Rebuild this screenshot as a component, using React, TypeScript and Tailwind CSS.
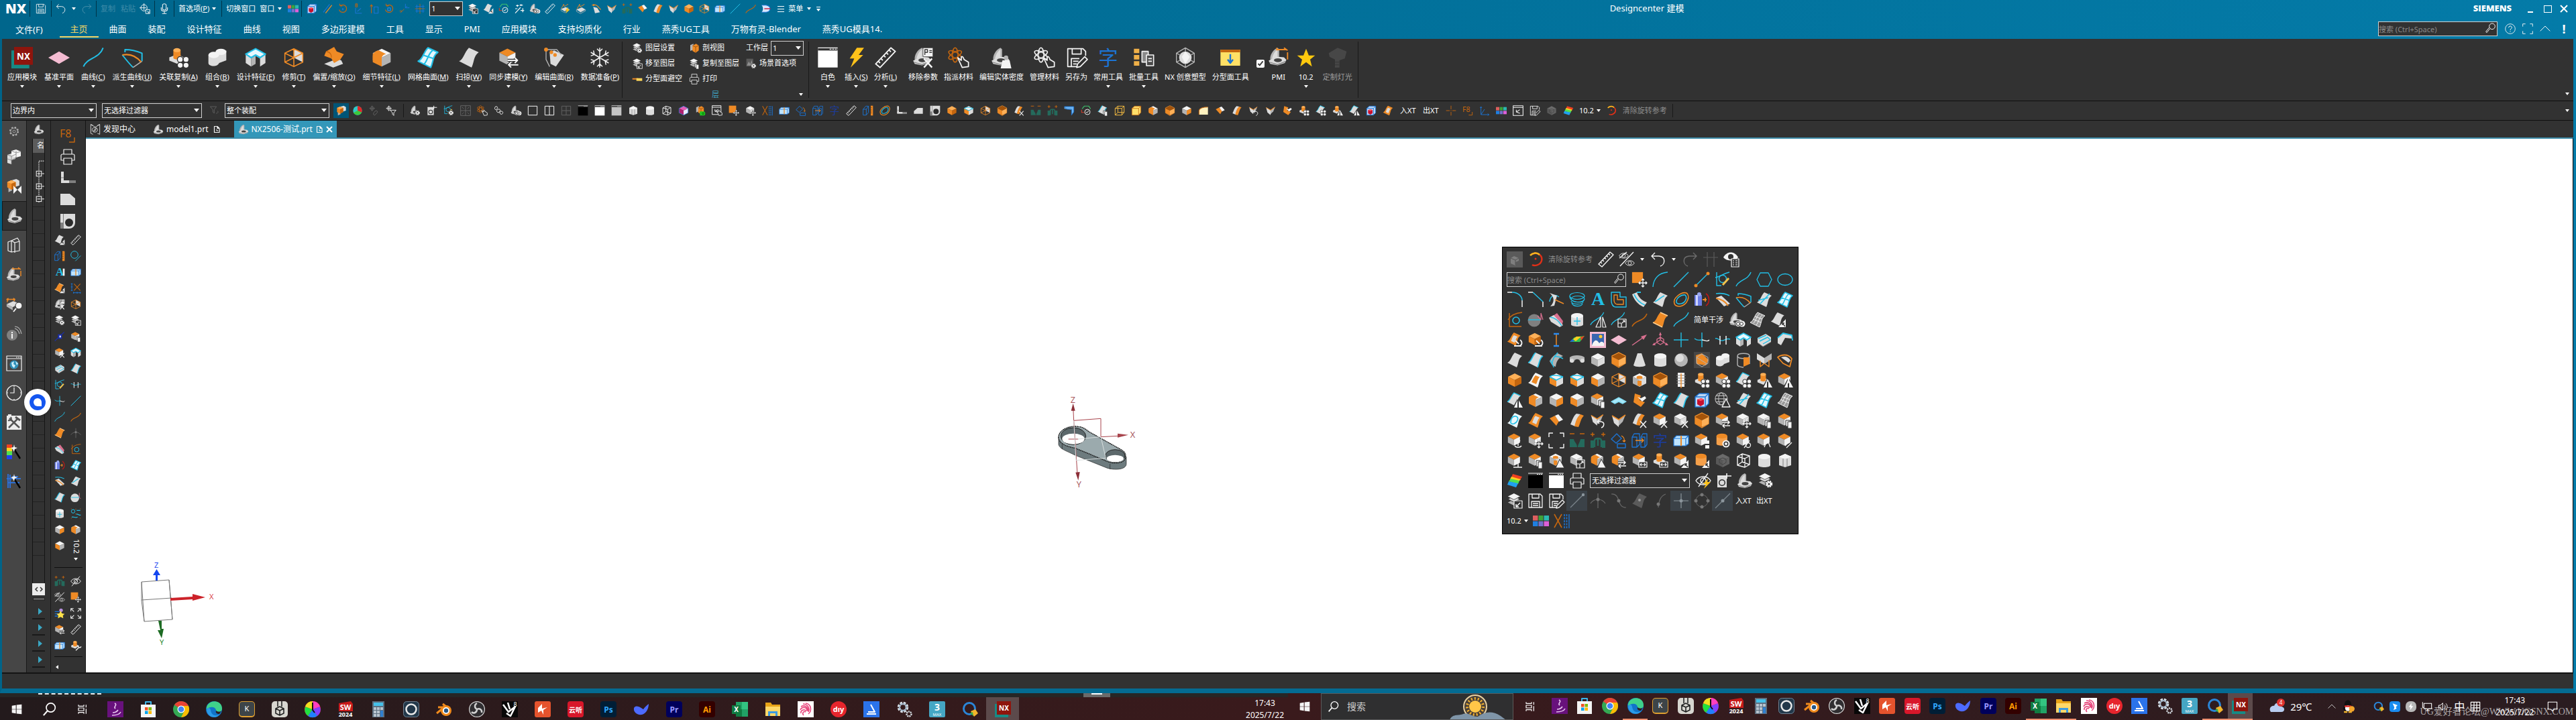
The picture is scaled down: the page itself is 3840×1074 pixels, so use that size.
import React from "react";
import clsx from "clsx";

// --- COLORS ---
const O = "#ee8a25";
const OD = "#c4660f";
const C = "#22bfe6";
const B = "#1c74d4";
const W = "#f4f4f4";
const G = "#dcdcdc";
const M = "#b4b4b4";
const D = "#808080";
const PK = "#d8708f";

// --- DRAWING HELPERS ---
const s = (d: string, stroke = W, w = 1.4, fill = "none") => (
  <path d={d} stroke={stroke} strokeWidth={w} fill={fill} strokeLinejoin="round" />
);
const f = (d: string, fill = W) => <path d={d} fill={fill} />;
const dot = (x: number, y: number, r: number, fill = W, stroke = "none") => (
  <circle cx={x} cy={y} r={r} fill={fill} stroke={stroke} strokeWidth={1} />
);
const cube = (t: string, l: string, r: string) => (
  <>
    {f("M12 2L22 7L12 12L2 7z", t)}
    {f("M2 7L12 12V22L2 17z", l)}
    {f("M12 12L22 7V17L12 22z", r)}
  </>
);
const sheet = (fill: string) => f("M1 16C6 14 7 6 12 1L23 6C17 10 18 17 15 23z", fill);
const cyl = (top: string, body: string) => (
  <>
    {f("M3 6V19C3 23 21 23 21 19V6z", body)}
    <ellipse cx={12} cy={6} rx={9} ry={4} fill={top} />
  </>
);
const glyph = (t: string, fill: string, size = 22) => (
  <text x={12} y={20} fontSize={size} fill={fill} textAnchor="middle" className="font-['Liberation_Serif','Noto_Sans_CJK_SC',serif]">
    {t}
  </text>
);
const bracket = (
  <>
    {f("M3 16C2 10 7 3 12 1L14 3V12L6 18z", M)}
    {f("M5 15C6 10 9 5 12 3V12z", G)}
    {f("M1 17L11 12L20 13L23 16L21 20L12 23L3 21z", G)}
    <ellipse cx={12.5} cy={16.5} rx={5} ry={2.4} fill="#444" />
    {s("M2 19L12 22L22 18", D, 1)}
  </>
);
const layers = (
  <>
    {f("M12 11L22 16L12 21L2 16z", M)}
    {f("M12 6L22 11L12 16L2 11z", "#323232")}
    {f("M12 6L21 10.500L12 15L3 10.500z", G)}
    {f("M12 1L22 6L12 11L2 6z", W)}
    {s("M3 7L12 11.500L21 7", "#555", 1)}
  </>
);
const win = (fill: string, bar = "#323232") => (
  <>
    {f("M1 1H23V23H1z", fill)}
    {f("M1 1H23V4H1z", bar)}
    {s("M1 1H23M14 2.500h2M17 2.500h2M20 2.500h2", W, 1)}
  </>
);
const rulerIcon = s("M1 19L18 1L23 5L6 23zM4 16l2 2M7 13l2 2M10 9.500l2 2M13 6.500l2 2M16 3.500l2 2", W, 1.4);
const undoIcon = s("M7 2L2 7L7 12M2 7H13C24 8 22 20 15 22", W, 1.4);
const atom = (c: string) => (
  <g fill="none" stroke={c} strokeWidth={1.3}>
    <ellipse cx={9} cy={10} rx={3.5} ry={9} />
    <ellipse cx={9} cy={10} rx={3.5} ry={9} transform="rotate(60 9 10)" />
    <ellipse cx={9} cy={10} rx={3.5} ry={9} transform="rotate(120 9 10)" />
  </g>
);
const eye = (
  <>
    {s("M1 12C6 4 18 4 23 12C18 20 6 20 1 12z", W, 1.4)}
    <circle cx={12} cy={12} r={4} fill="none" stroke={W} strokeWidth={1.4} />
  </>
);

// --- ICON BASES (24x24) ---
const bases: Record<string, React.ReactNode> = {
  cubeG: cube(W, M, G),
  cubeT: cube(O, M, W),
  cubeL: cube(W, O, M),
  cubeR: cube(W, M, O),
  cubeO: cube("#ffb057", O, OD),
  cubeE: <>{cube(W, O, M)}{f("M2 10C3 5 7 4 9 4L17 8C13 8 11 12 11 18L2 15z", O)}</>,
  cubeC: <>{cube(W, O, G)}{s("M2 7L12 12L22 7M2 7C8 3 14 5 22 7", C, 1.5)}</>,
  cubeW: <>{f("M12 2L22 7V17L12 12z", G)}{s("M12 2L22 7V17L12 22L2 17V7zM2 7L12 12L22 7M12 12V22M12 2V12L2 17", O, 1.2)}</>,
  cubeH: <>{cube(W, M, G)}<ellipse cx={12} cy={8} rx={4.5} ry={2.5} fill={O} />{f("M9 13L15 13V20L12 21L9 20z", O)}</>,
  cubeI: <>{s("M12 1L22 6V17L12 23L2 17V6z", O, 1.4)}{cube("#a55308", O, "#ffb057")}</>,
  cubeDim: <>{cube("#6b6b6b", "#585858", "#626262")}{s("M12 8L17 10V15L12 18L7 15V10z", "#444", 1)}</>,
  cubeRed: (
    <>
      {f("M2 7L8 2H22V17L17 22H2z", "#bcd8f7")}
      {s("M2 7H17V22H2zM2 7L8 2H22L17 7M22 2V17L17 22", B, 1.4)}
      {f("M5 11L11 9L15 11V18L10 21L5 18z", "#c8102e")}
      {f("M5 11L11 9L15 11L10 13z", "#ff5560")}
    </>
  ),
  cubeMag: <>{cube("#e35bb5", "#b02070", "#ececff")}{s("M12 2L22 7V17L12 22L2 17V7z", "#2d8cf0", 1)}</>,
  cubeY: <>{f("M2 7L8 2H22V16L17 22H2z", "#ffdf6b")}{s("M2 7H17V22H2zM2 7L8 2H22L17 7M22 2V16L17 22", OD, 1.2)}</>,
  cubeYw: s("M2 7H17V22H2zM2 7L8 2H22L17 7M22 2V16L17 22M8 2V16H22M8 16L2 22", "#f0b840", 1.5),
  box3: <>{f("M4 14L10 11V20L4 23z", M)}{f("M10 3L17 1L22 4V12L16 14z", G)}{f("M2 6L9 3L16 6V15L9 19L2 15z", O)}{f("M2 6L9 3L16 6L9 9z", "#ffb057")}{f("M9 9L16 6V15L9 19z", OD)}</>,
  wire: s("M3 6L10 2L21 5V18L14 22L3 19zM3 6L14 9L21 5M14 9V22M10 2V14L3 19M10 14L21 18", W, 1.4),
  gem: (
    <>
      {dot(12, 12, 7, G)}
      {s("M12 1L22 7V17L12 23L2 17V7zM12 1V5M22 7L18 9M22 17L18 15M12 23V19M2 17L6 15M2 7L6 9", M, 1)}
      {f("M12 5L17 11L12 19L8 11z", W)}
    </>
  ),
  cyl: cyl(W, G),
  cylO: cyl(O, "#f5a04a"),
  cylC: <>{cyl(W, G)}{s("M12 8V20M7 14H17", C, 1.3)}</>,
  drum: <>{f("M3 6L12 2L21 6V19L12 22L3 19z", G)}{f("M3 6L12 2L21 6L15 9L9 9z", W)}{s("M9 9V21M15 9V21", D, 1)}</>,
  cone: f("M9 2H15L21 20C18 23 6 23 3 20z", G),
  sphere: <>{dot(12, 12, 10, M)}{dot(10, 9, 6, G)}</>,
  sphereP: <>{dot(10, 13, 9.5, D)}{s("M1 12H20", C, 1.4)}{s("M20 2V12L15 6M20 2L23 12", PK, 1.2)}</>,
  sphereW: <>{dot(10, 13, 9.5, G)}{s("M2 12H20", C, 1.4)}{s("M20 2V12L23 15", PK, 1.2)}</>,
  union: <>{f("M2 9V18C2 22 12 23 14 18L22 15V4z", G)}<ellipse cx={8} cy={9} rx={6} ry={3.5} fill={W} /><ellipse cx={16} cy={5.5} rx={6} ry={3.5} fill={W} /></>,
  subtract: <>{s("M3 6V19C3 22 12 23 12 23M3 6C3 1 21 1 21 6V18M3 6C4 11 20 11 21 6", M, 1.4)}{f("M12 8H21V18L12 22z", O)}</>,
  post: <>{f("M2 13L12 9L22 14L12 21L2 17z", G)}{f("M7 4V14C8 16 15 16 16 14V4z", O)}<ellipse cx={11.5} cy={4} rx={4.5} ry={2.5} fill="#ffb057" /></>,
  cove: <>{f("M1 8L7 4L12 7L17 4L23 8V18L17 22V13L12 10L7 13V22L1 18z", G)}{f("M7 13L12 10V19L7 22z", M)}{s("M1 8L12 2L23 8L17 12L12 9L7 12z", C, 1.6, "#e6f8ff")}</>,
  coveF: s("M1 14L12 8L23 14L18 17L12 14L6 17z", "#7fdcf5", 1.4, "#a9e8f8"),
  rib: <>{f("M1 9L9 2L22 5V10L12 9L6 20L1 17z", G)}{s("M1 9L9 2L22 5L23 13", C, 1.8)}</>,
  slab: <>{f("M2 9L14 3L22 8V15L10 22L2 16z", G)}{s("M3 10L15 5M5 14L17 8L21 12L10 18", C, 1.4)}{s("M2 16L10 22L22 15", D, 1)}</>,
  sheet: sheet(G),
  sheetC: <>{sheet(G)}{s("M1 16C6 14 7 6 12 1M15 23C18 17 17 10 23 6", C, 1.7)}</>,
  sheetT: <>{sheet(G)}{s("M1 16C6 14 7 6 12 1L23 6", C, 1.6)}</>,
  sheetM: <>{sheet("#e3f6fc")}{s("M1 16C6 14 7 6 12 1L23 6C17 10 18 17 15 23zM8 19C12 14 12 8 17 4M6 9L18 13", C, 1.6)}</>,
  sheetX: <>{sheet(G)}{s("M6 18L20 3M3 13L18 9", C, 1.6)}</>,
  sheetS: <>{sheet(G)}{s("M4 15C10 12 12 9 18 6", C, 1.6)}</>,
  sheetG: <>{sheet("#9a9a9a")}{s("M1 16C6 14 7 6 12 1L23 6C17 10 18 17 15 23zM6 17C10 13 10 7 15 3M10 20C14 15 14 9 19 5M5 11L17 16M8 7L19 11", W, 1)}</>,
  sheetO: <>{sheet(O)}{s("M12 1L23 6M1 16L15 23", "#ffcf90", 1.5)}</>,
  sheetD: <>{sheet("#5a5a5a")}{dot(12, 11, 2, "#999")}</>,
  sheetF: <>{sheet(W)}{f("M6 15C8 12 9 8 12 5L18 7.500C15 11 15 14 13 18z", O)}</>,
  frameO: <>{sheet(O)}{f("M7 15C9 12 9 8 12 5.500L18 8C15 11 15 14 13 18z", G)}</>,
  sheetP: <>{f("M3 9L13 2L22 14L20 22z", PK)}{f("M1 9L8 5L22 20L17 23L4 15z", G)}{s("M3 8C10 9 16 14 20 21", C, 1.5)}</>,
  sheetR: <>{f("M1 4L8 1C10 8 16 14 23 16L18 23C9 19 4 12 1 4z", G)}{s("M4 4C7 11 12 17 20 20M8 1L14 1", C, 1.8)}</>,
  fold: <>{f("M5 2L14 5L12 12L20 15L14 22L3 15z", O)}{f("M9 7L14 9L20 6L22 9L16 14z", W)}</>,
  band: <>{f("M2 18C5 12 6 6 11 2L17 3C11 9 11 15 9 21z", G)}{f("M8 21C10 14 11 8 17 3L22 5C17 10 17 16 14 22z", O)}</>,
  flap: <>{f("M2 5L12 11L12 22L5 16z", G)}{f("M12 11L22 4L18 14L12 20z", M)}{s("M2 5L12 11L22 4", O, 1.6)}</>,
  bend: <>{f("M2 9L10 5L16 13L12 20z", O)}{f("M10 5L15 3L22 11L16 14z", W)}</>,
  offsetF: <>{f("M1 19L11 15L12 12L20 15L22 19L11 23z", G)}{f("M3 5L12 0L15 5L23 8L19 14L12 18L9 13L1 10z", O)}{s("M3 5C8 6 9 8 9 12", OD, 1)}</>,
  edit: <>{f("M7 6L12 4L23 9L14 22L8 19z", G)}{s("M3 3H15L20 9M3 3V14L7 22", M, 1)}{dot(3, 3, 2.2, O)}{dot(9, 6, 2, O)}{dot(13, 9, 2, O)}</>,
  curveA: <>{s("M4 6V3C12 3 18 5 23 7V16", C, 1.5)}{s("M1 9C5 14 10 20 13 23", C, 1.5)}{s("M13 23L23 16", M, 1.2)}{s("M1 9C11 7 18 12 22 17", O, 1.7)}</>,
  curveB: <>{f("M2 9L10 6L23 18L14 22z", G)}{s("M2 3C10 2 16 3 22 6", C, 1.6)}{s("M2 10C10 11 16 15 20 21", O, 2)}</>,
  curveD: <>{s("M1 8C6 4 16 2 22 10L19 22L9 17z", O, 1.8)}{f("M6 8C12 6 17 7 20 13L17 16z", G)}</>,
  sCurve: s("M1 22C5 12 19 13 23 1", C, 1.5),
  sCurveO: s("M1 22C5 12 19 15 23 3", OD, 1.6),
  curveS: <>{s("M2 15C3 6 10 3 16 8", C, 1.4)}{f("M2 2L13 6L9 21L3 22C10 15 9 8 2 2z", G)}{s("M10 12L23 18", O, 1.6)}</>,
  line: s("M1 23L23 1", C, 1.5),
  lineP: <>{s("M3 21L21 3", C, 1.4)}{dot(3, 21, 2.5, O)}{dot(21, 3, 2.5, O)}</>,
  lineD: <>{s("M2 22L21 3", "#7b858c", 1.2)}{dot(21, 3, 2.2, "#8b959c")}</>,
  lineM: <>{s("M1 23L23 1", "#7b858c", 1.2)}{dot(12, 12, 2.5, "#8b959c")}</>,
  crossD: <>{s("M1 12H23M12 1V23", "#8b959c", 1.2)}{dot(12, 12, 2.5, "#8b959c")}</>,
  tangD: <>{s("M1 16C6 8 18 8 23 16M12 1V23", "#6a6a6a", 1.2)}{dot(12, 10, 2.5, "#777")}</>,
  curveDim: <>{s("M1 2C16 1 8 22 23 22", "#666", 1.2)}{dot(12, 12, 2.5, "#777")}</>,
  curveDim2: <>{s("M20 2C12 5 10 12 9 22", "#666", 1.2)}{dot(9, 17, 2.5, "#777")}</>,
  ringD: <><circle cx={12} cy={12} r={9} fill="none" stroke="#666" />{dot(12, 3, 2.5, "#777")}{dot(3, 12, 2.5, "#777")}{dot(21, 12, 2.5, "#777")}{dot(12, 21, 2.5, "#777")}</>,
  arc: s("M1 23C2 10 10 2 23 1", C, 1.4),
  sketch: <>{s("M3 1V21H10M1 9C8 8 12 3 22 1", C, 1.4)}<circle cx={12} cy={11} r={5.5} fill="none" stroke={C} strokeWidth={1.4} />{s("M12 20L21 10", "#f2c14a", 3)}</>,
  sketchO: <>{s("M4 2V22H22M2 12C6 5 12 2 23 1", OD, 1.4)}<circle cx={14} cy={13} r={5} fill="none" stroke={C} strokeWidth={1.5} /></>,
  hexagon: s("M6 2H18L23 12L18 22H6L1 12z", C, 1.3),
  ellipse: <ellipse cx={12} cy={12} rx={11} ry={8.5} fill="none" stroke={C} strokeWidth={1.3} />,
  corner: <>{s("M8 1C18 1 23 8 23 13", C, 1.5)}{s("M1 1H8M23 13V23", W, 1.5)}</>,
  chamfer: <>{s("M8 1L23 15", C, 1.5)}{s("M1 1H8M23 15V23", W, 1.5)}</>,
  spring: (
    <g fill="none" stroke={C} strokeWidth={1.2}>
      <ellipse cx={12} cy={6.5} rx={11} ry={5} />
      <ellipse cx={13} cy={11} rx={10} ry={4.5} />
      <path d="M1 7C1 17 22 18 22 12M3 14C4 20 20 20 21 15M4 17C6 23 18 23 20 18" />
    </g>
  ),
  A: <g fontWeight="bold">{glyph("A", C, 28)}</g>,
  AI: <><g fontWeight="bold">{glyph("A", C, 26)}</g>{f("M19 4H23V20H19z", W)}</>,
  zi: glyph("字", "#1c3c9c", 22),
  ziB: glyph("字", B, 22),
  offset: <>{s("M1 1H14V8H23V23H8C3 23 1 18 1 14z", C, 1.4)}{s("M5 5H10V12H19V19H10C7 19 5 16 5 13z", O, 1.4)}</>,
  loop: <>{s("M2 18C-1 10 12 0 20 2C26 6 22 20 10 22C6 22 3 21 2 18z", O, 1.6)}{s("M5 16C4 10 12 4 18 5C22 9 18 17 12 18C8 19 6 18 5 16z", C, 1.6)}</>,
  loopS: <>{sheet("#eaf6fa")}{s("M6 15C6 9 9 5 14 6C19 8 16 15 11 17C8 18 6 17 6 15z", C, 1.6)}</>,
  barrel: <>{f("M1 5H12V21H1z", "#6d7fe8")}{f("M3 5H6V21H3z", "#cfd6ff")}{dot(8, 4, 3, "#9aa8f0")}{s("M13 12H19M17 9V15", O, 1.8)}{s("M18 3C24 7 24 17 18 21", "#c01818", 1.6)}</>,
  plane: f("M12 5L24 12L12 19L0 12z", "#f4bcd2"),
  arrowP: <>{s("M1 20L18 8", PK, 1.4)}{f("M23 4L18 12L14 7z", PK)}</>,
  csys: <>{s("M12 2V12L2 19M12 12L22 19M12 8L17 11V16L12 19L7 16V11z", PK, 1.3)}{f("M12 0L14 5H10z", PK)}{f("M0 20L3 16L5 20z", PK)}{f("M24 20L21 16L19 20z", PK)}</>,
  plus: s("M12 1V23M1 12H23", C, 1.4),
  plusC: <>{s("M12 1V23M1 10C6 14 9 12 12 12", C, 1.4)}{s("M12 12C16 12 20 16 23 12", W, 1.4)}</>,
  hh: <>{s("M1 10C5 8 6 14 12 13C17 12 18 9 23 11", C, 1.4)}{s("M8 6V19M17 6V19", W, 1.5)}</>,
  ibeam: <>{s("M12 4V20", O, 1.5)}{s("M8 3H16M8 21H16", "#2d8cf0", 2.5)}</>,
  blade: <>{f("M1 15L8 8L23 6L16 15z", "#30c050")}{f("M6 11L11 7L18 7L10 14z", "#ffd020")}{f("M1 15L5 11L8 14z", "#2060e0")}{f("M17 8L23 6L18 13z", "#f04020")}</>,
  picture: <>{f("M0 0H24V24H0z", "#f4bcd2")}{f("M3 3H21V21H3z", "#3a66b0")}{f("M3 20C7 10 11 12 14 17C17 13 20 15 21 17V21H3z", W)}{dot(16, 7, 2.5, "#ffc830")}</>,
  tube: <>{f("M1 8C5 4 19 4 23 8V13C21 17 17 17 16 13C14 10 10 10 8 13C7 17 3 17 1 13z", M)}{dot(4, 13, 3, G)}{dot(20, 13, 3, G)}</>,
  pipe: <>{f("M2 14C5 8 8 5 14 2L22 6C15 9 12 14 11 22L6 20z", M)}{s("M3 12C5 18 8 20 8 23M14 1C10 6 6 10 6 18M9 7C14 6 18 8 22 10", C, 1.4)}</>,
  trimO: <>{f("M0 0H24V24H0z", "#474747")}{f("M3 5L12 2L22 12L18 20L4 18z", O)}{s("M12 3L21 8V17L12 22L4 17V8zM4 8L20 18", M, 1)}</>,
  butterfly: <>{f("M1 2L12 9V18L1 11z", G)}{f("M23 2L12 9V18L23 11z", M)}{s("M6 13V22L12 17L19 22V12", O, 1.4)}</>,
  screw: <>{f("M7 1H17V22H7z", W)}{s("M5 5H19M5 9H19M5 13H19M5 17H19", D, 1.2)}{s("M12 2V24", O, 1.4)}</>,
  globe: <><circle cx={11} cy={11} r={10} fill="none" stroke={M} strokeWidth={1.3} /><ellipse cx={11} cy={11} rx={4.5} ry={10} fill="none" stroke={M} strokeWidth={1.3} />{s("M1 11H21M3 6H19M3 16H19", M, 1.2)}</>,
  corners: s("M1 7V1H7M17 1H23V7M23 17V23H17M7 23H1V17", W, 1.4),
  expand: s("M1 7V1H7M1 1L8 8M17 1H23V7M23 1L16 8M23 17V23H17M23 23L16 16M7 23H1V17M1 23L8 16", W, 1.6),
  moldA: <>{f("M1 10H7C8 15 12 16 12 22H1z", "#246a5c")}{f("M23 10H17C16 15 13 18 13 22H23z", "#246a5c")}{s("M1 2H8M16 2H23", OD, 1.6)}</>,
  moldB: <>{f("M1 12H6V23H1zM18 12H23V23H18z", "#246a5c")}{s("M7 22V12C7 8 17 8 17 12V22M12 9V20", "#246a5c", 2.5)}{s("M1 3H7M4 0V6M17 3H23M20 0V6", OD, 1.4)}</>,
  rotBox: <>{s("M1 10L9 2L16 9L8 16zM10 17H22V23H10z", B, 1.4)}{s("M16 5C20 7 21 10 20 14M18 12L20 14L22 12", O, 1.2)}</>,
  pushBox: <>{s("M1 7H8V22H1zM1 7L4 2H12V18L8 22M14 7H20V22H14zM14 7L17 2H23V18L20 22", B, 1.3)}{s("M6 12H18M15 9L18 12L15 15", O, 1.4)}</>,
  glass: <>{f("M1 9L5 5H23V17L19 20H1z", "#bfe4ff")}{s("M1 9H19V20H1zM1 9L5 5H23L19 9M23 5V17L19 20", B, 1.2)}{s("M12 5V20", O, 2)}</>,
  frameR: <>{s("M1 9L7 2H13V16L8 22H1zM1 9H8V22M8 9L13 2", B, 1.4)}{f("M18 1H23V23H18z", O)}{s("M18 5h3M18 9h3M18 13h3M18 17h3", "#7a3d08", 1)}</>,
  xDots: <>{s("M1 2L12 22M12 2L1 22", OD, 1.6)}<path d="M16 2V23M19.500 2V23" stroke={B} strokeWidth={1.6} strokeDasharray="3 1.500" />{s("M23 2V23", B, 1.4)}</>,
  xAxis: <>{s("M8 2L22 17M22 2L8 17", OD, 1.6)}{s("M3 1V18M1 2h4M1 9h4M1 17h4M6 22H23M7 20v4M15 20v4M22 20v4", B, 1.4)}</>,
  triCirc: <><circle cx={9} cy={9} r={8} fill="none" stroke={C} strokeWidth={1.4} />{s("M11 23L23 11", C, 1.4)}</>,
  circles: <>{s("M14 5h8M13 14C17 11 18 18 23 15M3 20C8 18 10 23 16 20", C, 1.8)}<circle cx={6} cy={7} r={4} fill="none" stroke={C} strokeWidth={1.5} />{s("M2 1v1M12 2v1M22 1v1M2 23v-1M12 12v1M22 22v1", O, 1.8)}</>,
  ruler: rulerIcon,
  rulerC: <>{s("M3 20L17 2", B, 1.8)}{s("M8 22L22 4", O, 2)}</>,
  print: s("M6 8V1H18V8M6 17H2V10C2 9 3 8 4 8H20C21 8 22 9 22 10V17H18M6 14H18V23H6z", W, 1.2),
  save: s("M2 2H19L22 5V22H2zM7 2V8H17V2M6 22V13H18V22M8 16h8M8 19h8", W, 1.3),
  saveEdit: <>{s("M13 22H2V2H19L22 5V10M7 2V8H17V2M6 22V13H15M8 16h6M8 19h4", W, 1.3)}{s("M12 23L13 19L21 11L24 14L16 22z", W, 1.3, "#323232")}</>,
  undo: undoIcon,
  redo: <g transform="translate(24 0) scale(-1 1)" opacity={0.3}>{undoIcon}</g>,
  hash: s("M7 1V23M17 1V23M1 9H23", "#5a5a5a", 1.2),
  touch: <><circle cx={10} cy={10} r={7} fill="none" stroke={W} strokeWidth={1.5} />{s("M10 0V15M0 10H15M14 14H23V23H14zM17 17l4 4m0-3v3h-3", W, 1.4)}</>,
  mic: s("M8 4C8 0 16 0 16 4V12C16 16 8 16 8 12zM5 9V13C5 19 19 19 19 13V9M12 18V23M7 23H17", W, 1.6),
  search: <><circle cx={15} cy={8} r={6.5} fill="none" stroke={W} strokeWidth={1.5} />{s("M10 13L3 22L1 20L8 11", W, 1.5)}</>,
  swatches: (
    <>
      {f("M0 4H7.500V11.500H0z", "#dc5f5f")}
      {f("M8.500 4H15.500V11.500H8.500z", "#3da33a")}
      {f("M16.500 4H24V11.500H16.500z", "#2bb8b0")}
      {f("M0 12.500H7.500V20H0z", "#1f7fe0")}
      {f("M8.500 12.500H15.500V20H8.500z", "#7470cc")}
      {f("M16.500 12.500H24V20H16.500z", "#dd5fd8")}
    </>
  ),
  rainbow: (
    <>
      {f("M9 2L23 6L20 11L7 7z", "#f04020")}
      {f("M7 6L21 10L18 13L5 10z", "#ffd020")}
      {f("M6 9L19 12L17 17L3 13z", "#50e050")}
      {f("M3 13L17 16L14 22L1 18z", "#20a0f0")}
    </>
  ),
  rot: <>{s("M5 5C14 -1 23 6 21 14C19 21 10 22 7 20", "#e03018", 2.5)}{s("M4 6C8 2 14 1 18 5", "#f5b720", 2.5)}{dot(12, 11, 1.5, "#e03018")}</>,
  rotO: <>{s("M6 6C14 0 22 6 20 14C18 22 6 22 4 14M6 6L5 1M6 6L11 6", OD, 1.8)}{dot(12, 13, 2, B)}</>,
  rotS: <>{s("M6 6C14 0 22 6 20 14C18 22 6 22 4 14M6 6L5 1M6 6L11 6", OD, 1.8)}{s("M9 10H15V16H9z", "#2d8cf0", 1.6)}</>,
  axisUp: <>{s("M7 22V3M4 7L7 3L10 7", OD, 1.6)}{s("M13 8H22V22H13z", B, 1.6)}</>,
  axisB: <>{s("M6 10V22H20M10 18L18 11", B, 1.6)}{s("M6 1h4v3h-4zM6 4v4h4v-4", OD, 1.4)}</>,
  grid4: <>{s("M12 1V23M1 12H23", OD, 1.3)}{s("M5 3V21M19 3V21M2 7H22M2 17H22", B, 1.5)}</>,
  axisX: <>{s("M14 10V1M14 10H23M14 10L18 6", B, 1.5)}{s("M3 21L11 13M1 17h5", OD, 1.4)}</>,
  hex8: <>{s("M3 8L8 2H18L22 8", "#3ec46d", 1.6)}{s("M2 10V16H8", "#d0402c", 1.6)}<circle cx={15} cy={15} r={6} fill="none" stroke={W} strokeWidth={1.4} />{s("M12 15L14 17L18 12", W, 1.5)}</>,
  sparkles: s("M3 22L15 9M8 3V8M5 5H11M16 2V6M13 4H20M3 12H8M20 11V20M15 16H23", W, 1.8),
  palmBox: <>{f("M2 14L14 9L22 14L11 20z", G)}{s("M3 13L9 2L10 8L20 2", O, 1.5)}{s("M11 20L22 14V17L11 23L2 18V14", M, 1.2)}</>,
  bentO: <>{f("M5 8L14 10L20 20L9 22z", G)}{s("M2 4C8 2 14 4 18 10L22 14", O, 1.6)}{dot(6, 4, 2, O)}</>,
  dShape: <>{f("M2 4H12C24 6 24 18 12 20H2C6 15 6 9 2 4z", "#d8e6ff")}{s("M2 4H12C24 6 24 18 12 20H2", B, 1.6)}{s("M8 12H22", "#c8102e", 2)}</>,
  win: win("#fff"),
  winB: win("#000"),
  winGy: win("#c4c4c4"),
  pane1: s("M2 2H22V22H2z", W, 1.5),
  pane2: s("M2 2H22V22H2zM12 2V22", W, 1.5),
  pane4: s("M2 2H22V22H2zM12 2V22M2 12H22", "#606060", 1.5),
  pane9: s("M1 1H23V23H1zM12 1V23M1 12H23M4 4l4 4M20 4l-4 4M4 20l4-4M20 20l-4-4", "#707070", 1.2),
  eyeOff: <>{eye}{s("M3 23L21 1", W, 1.4)}</>,
  eyeBolt: <>{eye}{s("M5 21L19 1", W, 1.4)}{f("M19 9L12 17H16L13 24L23 14H18z", "#ffc21a")}</>,
  eyePair: <><g transform="translate(0 -1) scale(.62)">{eye}</g><g transform="translate(9 10) scale(.62)">{eye}</g>{s("M2 22L22 1M1 10L12 1", W, 1.4)}</>,
  eyeList: <>{f("M0 9C5 -1 17 -1 22 9C17 15 5 15 0 9z")}{dot(11, 8, 4, "#323232")}{s("M12 11H23V23H12z", W, 1.2, "#323232")}{s("M14 14h2M14 17h2M14 20h2M18 14h3M18 17h3M18 20h3", W, 1.2)}</>,
  bracket,
  layers,
  bars: <>{f("M2 2H6V17H2z", G)}{f("M2 15H24V19H2z", G)}{f("M14 15H24V19H14z", D)}{s("M2 11H6", D, 1)}</>,
  trap: f("M1 3H15L23 10V20H1z", G),
  trapS: f("M2 19V13L10 6H22V19z", G),
  plateHole: <>{f("M1 1H23V14C23 20 18 23 14 23H1z", G)}{f("M1 14H5V23H1z", D)}{dot(14, 14, 6, "#2b2b2b")}{s("M5.500 1V23", D, 1)}</>,
  bolts: <>{f("M2 5H16V22H2z", G)}{dot(9, 15, 5, "#2b2b2b")}{dot(9, 15, 3.5, G)}{s("M2 5H23M16 1V9", W, 1.6)}</>,
  blocks: <>{f("M2 9L8 7L14 9V15L8 17L8 23L2 21z", G)}{f("M8 3L15 1L22 4V11L15 13L8 10z", W)}{s("M2 9L8 11V23M8 11L15 8M2 15L8 17L15 13M15 3V13M15 6L22 4M8 3L15 6", D, 0.8)}</>,
  books: s("M3 7L8 5V22L3 20zM8 5L13 3M8 22L20 20V6L13 8L13 23M13 8L8 5L17 1L20 6", W, 1.2),
  info: <>{dot(9, 14, 8, D)}{f("M8 12H10V19H8zM8 9H10V11H8z")}{s("M13 4C17 5 19 8 20 12M13 1C19 1 22 6 23 12", M, 1.2)}</>,
  web: <>{s("M1 1H23V23H1zM1 5H23M15 3h2M18 3h2M21 3h1", W, 1.2)}{dot(12, 14, 6.5, "#2f8fb8")}{f("M8 11L12 9L11 13L14 15L12 19L9 16zM14 9L18 12L16 15z", "#cdeefa")}</>,
  clock: <><circle cx={12} cy={12} r={11} fill="none" stroke={W} strokeWidth={1.2} />{s("M12 4V12H6M12 1v2M12 23v-2M1 12h2M23 12h-2", W, 1.2)}</>,
  tools: <>{f("M1 2H23V23H1z", "#ececec")}{f("M3 0H8V3H3z", "#ececec")}{s("M5 6L20 20M18 6L4 20", "#555", 2.5)}{s("M14 4L21 9", "#555", 3)}{s("M3 9C7 10 9 7 7 4", "#555", 2)}</>,
  wandR: <>{f("M1 1H9V6H1z", "#f04020")}{f("M1 6H9V11H1z", "#ffd020")}{f("M1 11H9V17H1z", "#50e050")}{f("M1 17H9V23H1z", "#2040f0")}{s("M12 8L21 22", "#000", 2.5)}{f("M12 1L13 5L17 6L13 8L12 12L10 8L7 6L11 5z")}</>,
  wandB: <>{s("M3 1V22M6 2V22M1 8H22M3 14H20M9 5H18", "#2d6fd4", 2)}{s("M12 8L21 22", "#000", 2.5)}{f("M12 1L13 5L17 6L13 8L12 12L10 8L7 6L11 5z")}</>,
  gear: (
    <>
      <circle cx={12} cy={12} r={9} fill="none" stroke={M} strokeWidth={3} strokeDasharray="3.500 3.570" />
      <circle cx={12} cy={12} r={7.5} fill="none" stroke={M} strokeWidth={1.2} />
      <circle cx={12} cy={12} r={3} fill="none" stroke={M} strokeWidth={1.2} />
    </>
  ),
  funnel: s("M2 3H16L11 10V18L8 15V10zM15 18C20 18 21 14 18 13", "#5f5f5f", 1.4),
  filterP: <>{s("M7 1V13M1 7H13", W, 1.4)}<circle cx={7} cy={7} r={4} fill="none" stroke={W} />{s("M10 11H23L18 17V23L15 20V17z", W, 1.4)}</>,
  dimlink: s("M7 1V13M1 7H13M3 7C3 2 11 2 11 7C11 12 3 12 3 7M13 14C17 10 21 14 18 17L13 22C9 22 9 18 13 14z", "#666", 1.4),
  pie: <>{dot(12, 12, 10, "#30c8c8")}{f("M12 12V2C20 2 24 10 21 16z", "#e02828")}{f("M12 12L21 16C17 24 6 23 3 17z", "#3cc83c")}</>,
  atomO: atom(OD),
  atomW: atom(W),
  linkW: s("M3 4C6 1 10 4 8 7L6 10C3 11 1 7 3 4zM8 10C12 7 16 10 14 13L12 16C8 17 5 14 8 10zM14 14C18 12 22 15 20 18C18 22 12 20 14 14z", W, 1.4),
  nx: <>{f("M0 4H6V18H20V24H0z", "#178a85")}{f("M3 0H24V20H3z", "#8e150d")}<text x={13.5} y={14} fontSize={10} fontWeight="bold" fill="#fff" textAnchor="middle">NX</text></>,
  star: f("M12 2L15 9.500L22 9.500L16.500 14L18.500 22L12 17L5.500 22L7.500 14L2 9.500L9 9.500z", "#ffc90e"),
  bolt: f("M13 1H21L15 9H20L6 23L10 13H5z", "#ffc21a"),
  snow: s("M12 1V23M2 6L22 18M22 6L2 18M9 2L12 5L15 2M9 22L12 19L15 22M2 10L6 8.500L5 4M22 10L18 8.500L19 4M2 14L6 15.500L5 20M22 14L18 15.500L19 20", W, 1.1),
  batch: <>{f("M1 2H7V7H1zM1 9H7V14H1zM1 16H7V21H1z", "#f0b048")}{s("M10 5H17V17H10z", W, 1.2, "#8a8a8a")}{s("M15 9H23V21H15zM17 13h4M17 16h4", W, 1.2, "#4a4a4a")}</>,
  splitT: <>{f("M1 3H23V21H1z", "#ffe066")}{f("M1 3H23V6H1z", OD)}{s("M12 8V17M9 14L12 18L15 14", B, 1.8)}</>,
  lamp: <>{f("M2 7L12 1L22 5L20 13L14 15V23H9V14L3 11z", "#5d5d5d")}{s("M9 17H14M9 20H14", "#454545", 1.2)}</>,
  section: <>{f("M3 5L10 2V15L3 18z", M)}{f("M8 6L16 2L22 6V17L15 22L8 18z", O)}{s("M15 9V22M8 6L15 9L22 6", "#7a3d08", 1)}</>,
  hatch: <>{f("M1 10H14V13H1z", O)}{f("M10 10H23V16H10z", "#ffd75a")}</>,
  scene: <>{f("M1 1H18V20H1z", "#5a5a5a")}{f("M2 18L7 8L11 14L14 4L17 18z", "#8f8f8f")}</>,
  target: s("M12 1V9M12 15V23M1 12H9M15 12H23M12 11v2", OD, 1.4),
  f8: <><text x={0} y={15} fontSize={16} fill={OD}>F8</text>{s("M22 15V22H14", OD, 1.4)}</>,
  axes: s("M4 4V21H22M4 21L12 9M2 6L4 3L6 6M19 19L22 21L19 23", B, 1.4),
  nodeWin: s("M1 1H23V23H1zM1 5H23M8 10V15L16 18M8 15L16 10", W, 1.6),
  blueCorner: <>{f("M1 3H22V15L17 22V10L1 8z", "#6db4f2")}{s("M1 3H22V15L17 22V9H6z", B, 1.3)}</>,
  quarter: <>{f("M2 21V12C3 6 10 4 22 4V21z", "#fff2c0")}{s("M2 21V12C3 6 10 4 22 4", OD, 1.6)}</>,
  boxSel: <>{f("M0 0H24V24H0z", "#5a5a5a")}{f("M6 10L11 7L18 10V14L13 16V21L6 18z", "#7e7e7e")}{s("M6 10L13 13L18 10M13 13V20", "#555", 1)}</>,
  orangeSq: f("M1 1H19V19H1z", O),
  magnifyWire: <>{f("M1 13L12 8L22 12L11 18z", G)}{s("M2 5H14M4 3L1 5L4 7M12 3L15 5L12 7M2 5V10M14 5V8", O, 1.4)}{f("M1 13V17L11 23V18z", M)}</>,
  navy: <>{s("M1 22L22 2", "#1a2fae", 1.8)}{f("M8 7H17V17H8z", "#1a2fae")}{f("M11 12L13 9L15 12L13 15z", "#fff")}</>,
  starman: <>{dot(15, 5, 4, "#b890e0")}{s("M1 8H11M1 13H9M1 18H8", B, 2)}{f("M14 6L17 12L23 13L19 17L20 23L14 20L8 23L9 17L5 13L11 12z", "#ffe14a")}</>,
  find: s("M7 3L2 1V21L7 23M17 3L22 1V23L17 21M2 1L12 7L22 1M5 13C5 6 17 6 17 13C17 20 5 20 5 13M8 16L11 11L14 10L12 15z", W, 1.2),
  clip: s("M5 3H14L20 9V21H5zM14 3V9H20M11 13L15 17", W, 2.4),
  question: <><circle cx={12} cy={12} r={11} fill="none" stroke={W} strokeWidth={1.3} />{s("M8.500 9.500C8.500 4.500 15.500 5 15.500 9C15.500 12 12 11.500 12 15M12 17v2", W, 1.5)}</>,
  up: s("M1 17L12 6L23 17", W, 1.5),
};

// --- BADGES (bottom-right corner) ---
const badges: Record<string, React.ReactNode> = {
  copy: <>{s("M13 12H19V21H13z", "#323232", 1, W)}{s("M16 14H22V24H16z", "#323232", 1, W)}</>,
  x: s("M13 13L22 23M22 13L13 23", W, 1.6),
  swap: <>{s("M11 15H22M19 12L22 15L19 18M23 20H12M15 17L12 20L15 23", "#323232", 3.5)}{s("M11 15H22M19 12L22 15L19 18M23 20H12M15 17L12 20L15 23", W, 1.5)}</>,
  move: <>{s("M17 11V23M11 17H23", "#323232", 4)}{s("M17 11V23M11 17H23M15 13L17 11L19 13M15 21L17 23L19 21M13 15L11 17L13 19M21 15L23 17L21 19", W, 1.3)}</>,
  mir: <>{f("M16 10V23H9zM18 10V23H25z", "#323232")}{f("M16 12V23H11zM18 12V23H24z")}</>,
  mirO: s("M16 8V23H9zM19 8V23H24z", W, 1.2),
  dots: <>{dot(14, 14, 3.2, W, "#323232")}{dot(20.5, 14, 3.2, W, "#323232")}{dot(14, 20.5, 3.2, W, "#323232")}{dot(20.5, 20.5, 3.2, W, "#323232")}</>,
  gear: <>{dot(17, 17, 6, "#323232")}<circle cx={17} cy={17} r={4} fill="none" stroke={W} strokeWidth={2.5} strokeDasharray="2.200 1" />{dot(17, 17, 3.5)}{dot(17, 17, 1.5, "#323232")}</>,
  rings: <><circle cx={14} cy={18} r={4.5} fill={W} stroke="#323232" />{dot(20, 18, 4.5, W)}<circle cx={14} cy={18} r={2.5} fill="none" stroke="#323232" /><circle cx={19} cy={18} r={2.5} fill="none" stroke="#323232" /></>,
  scale: s("M11 11H23V23H11zM11 17H16V23M17 17L21 13M18 13H21V16", W, 1.2, "#323232"),
  box: <>{s("M11 12H23V23H11z", W, 1.2, "#323232")}{s("M20 15L14 21M14 17V21H18", W, 1.5)}</>,
  pick: <>{f("M23 11V23H12z")}{s("M22 22L18 17M18 20V17H21", "#323232", 1.3)}</>,
  tri: s("M17 10L24 23H11z", "#323232", 1, W),
  triO: s("M17 10L23 22H11z", W, 1.3, "#323232"),
  back: s("M14 11L11 14L14 17M11 14H17C23 15 21 22 17 23", W, 1.5),
  ring: <>{dot(17, 17, 5.5, W)}{dot(17, 17, 3.5, "#323232")}{dot(17, 17, 2, W)}</>,
  perp: s("M17 11V22M10 22H23", W, 1.5),
  lam: s("M12 22L16 12M21 22L17 12", W, 1.3),
  par: s("M12 20L19 13M14 23L22 15", W, 1.3),
  tan: <><circle cx={19} cy={19} r={3.5} fill="none" stroke={W} strokeWidth={1.3} />{s("M13 23L21 12", W, 1.3)}</>,
  up: s("M17 10V20M14 13L17 10L20 13M12 20C14 23 20 23 22 20", W, 1.5),
  wide: s("M11 14H23V22H11zM13 18H21M15 16L13 18L15 20M19 16L21 18L19 20", W, 1.2, "#323232"),
  micro: s("M13 13L18 18M11 21H22M20 12C24 15 23 20 19 21", W, 1.8),
  blk: f("M17 12H23V17H17zM17 19H23V24H17z"),
  hand: s("M11 12L15 15V11C17 10 18 14 18 14L23 17V22L16 23z", W, 1.3, "#323232"),
  ax: s("M10 4V1M10 3H21M18 1L22 4M22 6V14", O, 1.4),
  green: <>{f("M11 14H20C24 15 24 23 20 23H11z", "#1ec81e")}<circle cx={18} cy={18.5} r={2} fill="none" stroke="#064d06" /></>,
  lens: <>{dot(19, 14, 5, W, "#323232")}{s("M15 18L11 23", W, 2)}</>,
  bow: f("M11 11L17 17L11 23zM23 11L17 17L23 23z"),
  p: <>{s("M12 1H23V11H12z", "#323232", 0.5, W)}{s("M14 9V3H17V6H14M19 4H22M19 6H22", "#333", 1)}{s("M13 13L22 23M22 13L13 23", W, 1.8)}</>,
  weight: <>{f("M13 15H21L23 24H11z")}{dot(17, 12, 2.5, M)}</>,
  wrench: s("M12 23L19 16M17 12C17 17 22 18 24 14", W, 2),
  zap: f("M18 8L11 16H15L12 23L22 14H17z", "#ffc21a"),
};

const Icon = ({ name, className = "size-4" }: { name: string; className?: string }) => {
  const [base, badge] = name.split("+");
  return (
    <svg viewBox="0 0 24 24" fill="none" aria-hidden="true" className={clsx("shrink-0 overflow-visible", className)}>
      {badge ? <g transform="scale(.9)">{bases[base]}</g> : bases[base]}
      {badge && badges[badge]}
    </svg>
  );
};

const Tool = ({ name, cell = "w-[25px] h-6", size = "size-4" }: { name: string; cell?: string; size?: string }) => (
  <button aria-label={name} className={clsx("flex shrink-0 items-center justify-center", cell)}>
    <Icon name={name} className={size} />
  </button>
);

const Caret = ({ className = "" }: { className?: string }) => (
  <span className={clsx("flex shrink-0 items-center justify-center", className)}>
    <svg viewBox="0 0 6 4" className="h-1 w-1.5" aria-hidden="true">
      <path d="M0 0H6L3 4z" fill="#fff" />
    </svg>
  </span>
);

const Sep = ({ className = "h-6" }: { className?: string }) => (
  <span className={clsx("w-px shrink-0 bg-black/50", className)} />
);

// Label with the access key underlined: 曲线(C)
const Label = ({ text }: { text: string }) => {
  const m = text.match(/^(.*\()([A-Z])(\))$/);
  if (!m) return <>{text}</>;
  return (
    <>
      {m[1]}
      <u>{m[2]}</u>
      {m[3]}
    </>
  );
};

const Dropdown = ({ label, value, className }: { label: string; value: string; className: string }) => (
  <span className={clsx("relative inline-flex h-[22px] shrink-0", className)}>
    <select aria-label={label} className="h-full w-full appearance-none border border-[#d0d0d0] bg-[#323232] pl-0.5 text-[11px] leading-4 text-white">
      <option>{value}</option>
    </select>
    <svg viewBox="0 0 8 5" className="pointer-events-none absolute right-1 top-2 h-[5px] w-2" aria-hidden="true">
      <path d="M0 0H8L4 5z" fill="#fff" />
    </svg>
  </span>
);

const SearchBox = ({ className }: { className: string }) => (
  <span className={clsx("relative inline-flex h-[22px] shrink-0", className)}>
    <input
      aria-label="搜索"
      placeholder="搜索 (Ctrl+Space)"
      className="h-full w-full border border-[#d0d0d0] bg-[#323232] text-[11px] text-white placeholder:text-[#8a8a8a]"
    />
    <Icon name="search" className="pointer-events-none absolute right-0.5 top-0.5 size-4" />
  </span>
);

// --- DATA ---
const quickLeft = ["cubeRed", "rulerC", "rotO", "axisB", "axisUp", "rotS", "axisX", "grid4"];
const quickRight = [
  "layers+box", "sheet+pick", "hex8", "sparkles", "bracket+rings", "ruler", "palmBox+zap", "palmBox", "bentO", "flap",
  "moldB", "bend", "band", "flap", "cubeO", "cubeW", "glass", "line", "sCurveO", "dShape",
];

const menuTabs = [
  "主页", "曲面", "装配", "设计特征", "曲线", "视图", "多边形建模", "工具", "显示", "PMI", "应用模块",
  "支持均质化", "行业", "燕秀UG工具", "万物有灵-Blender", "燕秀UG模具14.",
];

interface RibbonItem {
  icon: string;
  text: string;
  menu?: boolean;
  gap?: boolean;
}

const ribbonMain: RibbonItem[] = [
  { icon: "nx", text: "应用模块", menu: true },
  { icon: "plane", text: "基准平面", menu: true },
  { icon: "sCurve", text: "曲线(C)", menu: true },
  { icon: "curveA", text: "派生曲线(U)", menu: true },
  { icon: "post+dots", text: "关联复制(A)", menu: true },
  { icon: "union", text: "组合(B)", menu: true },
  { icon: "cove", text: "设计特征(E)", menu: true },
  { icon: "cubeW", text: "修剪(T)", menu: true },
  { icon: "offsetF", text: "偏置/缩放(O)", menu: true },
  { icon: "cubeE", text: "细节特征(L)", menu: true },
  { icon: "sheetM", text: "网格曲面(M)", menu: true },
  { icon: "sheet", text: "扫掠(W)", menu: true },
  { icon: "cubeT+swap", text: "同步建模(Y)", menu: true },
  { icon: "edit", text: "编辑曲面(R)", menu: true },
  { icon: "snow", text: "数据准备(P)", menu: true },
];

const ribbonTools: RibbonItem[] = [
  { icon: "win", text: "白色", menu: true },
  { icon: "bolt", text: "插入(S)", menu: true },
  { icon: "ruler", text: "分析(L)", menu: true },
  { icon: "bracket+p", text: "移除参数", gap: true },
  { icon: "atomO+hand", text: "指派材料" },
  { icon: "bracket+weight", text: "编辑实体密度" },
  { icon: "atomW+hand", text: "管理材料" },
  { icon: "saveEdit", text: "另存为" },
  { icon: "ziB", text: "常用工具", menu: true },
  { icon: "batch", text: "批量工具", menu: true },
  { icon: "gem", text: "NX 创意塑型" },
  { icon: "splitT", text: "分型面工具" },
];

const barIcons = [
  "bracket+gear", "bolts", "sketch+gear", "pane9", "atomO+hand", "linkW", "bracket+rings", "pane1", "pane2", "pane4", "winB",
  "win", "winGy", "drum", "cyl", "wire", "cubeMag", "section+green", "nodeWin+hand", "orangeSq+move", "cubeG+move", "xDots",
  "glass", "rotBox", "pushBox", "zi", "ruler", "frameR", "loop", "bars", "trapS", "plateHole", "cubeO", "cubeC", "cubeW",
  "cubeI", "band+x", "moldA", "moldB", "blueCorner", "hex8", "sheetC+copy", "cubeYw", "cubeY", "cubeE", "cubeI", "cubeR",
  "quarter", "bend", "band", "flap+back", "flap", "fold", "post+dots", "sheetT+dots", "post+mir", "sheetT+mir", "cubeRed", "frameO",
];

const resourceIcons = [
  "blocks", "box3+bow", "bracket", "books", "bracket+ax", "magnifyWire+lens", "info", "web", "clock", "tools", "wandR", "wandB",
];

const sideIcons = [
  "sheet+pick", "ruler", "frameR", "triCirc", "AI", "glass", "sheetO+pick", "xAxis", "bracket+p", "cubeW",
  "layers+gear", "layers+box", "navy", "cubeT+copy", "cubeT+x", "cove", "slab", "sheetC", "sketch", "hh",
  "plusC", "line", "sCurve", "sCurveO", "sheetO", "tangD", "sheetP", "sketchO", "barrel", "sheetM",
  "curveB", "sheetS", "sheetC", "sphereW", "cylC", "circles", "cubeR", "cubeE", "cubeL",
];

const sideBottom = [
  "moldB", "eyeOff", "eyePair", "orangeSq+move", "starman", "expand", "cubeT+swap", "ruler", "glass", "post+wrench",
];

const panelRows = [
  ["sheet", "sheetC", "pipe", "tube", "cubeG", "cubeI", "cone", "cyl", "sphere", "trimO", "union", "subtract", "butterfly", "curveD"],
  ["cubeO", "sheetF", "cubeC", "cubeC", "cubeL", "cubeW", "cubeH", "cubeI", "screw", "post+dots", "cubeT+dots", "sheetT+dots", "post+mir", "cubeT+mir"],
  ["sheetT+mir", "cubeE", "cubeR", "cubeL", "cubeT+copy", "coveF", "fold", "sheetM", "sheetC", "cubeRed", "globe+triO", "sheetX", "sheetM", "sheetG"],
  ["loopS", "frameO", "bend", "band", "flap+back", "flap", "band+x", "cubeT+x", "cubeG+x", "cubeI", "cubeT+swap", "cubeG+move", "cubeG+copy", "cubeT+copy"],
  ["cubeT+up", "cubeT+move", "corners", "moldA", "moldB", "rotBox", "pushBox", "zi", "glass", "cubeT+blk", "cylO+ring", "cubeT+tan", "cubeT+lam", "cubeT+par"],
  ["cubeT+perp", "cubeT+copy", "cubeH+tri", "cubeG+scale", "cubeE+tri", "cubeE+swap", "cubeT+wide", "post+wide", "cubeT+pick", "cylO+pick", "cubeDim", "wire", "cyl", "drum"],
];

// --- RIBBON ---
const RibbonButton = ({ item }: { item: RibbonItem }) => (
  <button className={clsx("flex shrink-0 flex-col items-center px-1 pt-3", item.gap && "ml-2")}>
    <Icon name={item.icon} className="size-8" />
    <span className="mt-[5px] whitespace-nowrap leading-4">
      <Label text={item.text} />
    </span>
    {item.menu && <Caret className="mt-1" />}
  </button>
);

const SmallCommand = ({ icon, text }: { icon: string; text: string }) => (
  <button className="flex h-[23px] items-center gap-1 whitespace-nowrap">
    <Icon name={icon} />
    {text}
  </button>
);

const Header = () => (
  <header className="bg-linear-to-r from-[#00668c] to-[#047ba8]">
    <div className="flex h-[26px] items-center pl-2 text-[11px]">
      <span className="w-9 font-['Open_Sans',sans-serif] text-xl font-extrabold">NX</span>
      <Sep />
      <Tool name="save" cell="w-[31px]" />
      <Sep />
      <Tool name="undo" cell="w-7" />
      <Caret className="w-2.5" />
      <Tool name="redo" cell="w-7" />
      <Sep />
      <button disabled className="px-1.5 text-[#3f8ba8]">复制</button>
      <button disabled className="pl-0.5 text-[#3f8ba8]">粘贴</button>
      <Tool name="touch" cell="w-7" />
      <Sep />
      <Tool name="mic" cell="w-7" />
      <Sep />
      <button className="pl-1.5"><Label text="首选项(P)" /></button>
      <Caret className="mr-1 w-3.5" />
      <Sep />
      <button className="pl-1.5">切换窗口</button>
      <button className="pl-1.5">窗口</button>
      <Caret className="w-4" />
      <Tool name="swatches" cell="w-6" />
      <Sep />
      <div className="mx-[3px] flex">
        {quickLeft.map((n, i) => <Tool key={i} name={n} cell="w-[23px]" />)}
      </div>
      <Dropdown label="工作图层" value="1" className="w-[50px]" />
      <div className="ml-[3px] flex">
        {quickRight.map((n, i) => <Tool key={i} name={n} cell="w-[23px]" />)}
      </div>
      <button className="flex items-center gap-1.5 pl-1.5">
        <span className="flex flex-col gap-[3px]">
          <i className="h-px w-2.5 bg-white" />
          <i className="h-px w-2.5 bg-white" />
          <i className="h-px w-2.5 bg-white" />
        </span>
        菜单
        <Caret />
      </button>
      <button aria-label="更多" className="ml-2 flex flex-col items-center gap-0.5">
        <i className="h-px w-1.5 bg-white" />
        <Caret />
      </button>
      <h1 className="flex-1 text-center text-[13px]">Designcenter 建模</h1>
      <span className="font-['Open_Sans',sans-serif] text-[13px] font-extrabold">SIEMENS</span>
      <div className="ml-6 flex items-center gap-3 pr-3">
        <button aria-label="最小化" className="flex h-3 w-3 items-end"><i className="h-0.5 w-2 bg-white" /></button>
        <button aria-label="最大化" className="h-[11px] w-3 border border-white" />
        <button aria-label="关闭">
          <svg viewBox="0 0 12 12" className="size-3"><path d="M1 1L11 11M11 1L1 11" stroke="#fff" strokeWidth={2} /></svg>
        </button>
      </div>
    </div>
    <div className="flex h-8 items-start text-[13px] leading-5">
      <button className="mr-[25px] h-[30px] pl-[23px] pt-1.5">文件(F)</button>
      <nav className="flex">
        {menuTabs.map((t) => (
          <button
            key={t}
            className={clsx("flex h-[30px] items-center whitespace-nowrap border-b-2 px-4 pt-1.5", t === "主页" ? "border-[#f3d667] text-[#f3d667]" : "border-transparent")}
          >
            {t}
          </button>
        ))}
      </nav>
      <div className="ml-auto flex items-center gap-2.5 pr-2 pt-1.5">
        <SearchBox className="mr-px w-[178px]" />
        <Icon name="question" />
        <Icon name="corners" />
        <Icon name="up" />
        <span className="w-5 text-center text-lg font-bold leading-5">!</span>
      </div>
    </div>
  </header>
);

const Ribbon = () => (
  <section className="flex h-[93px] border-b border-black/70 bg-[#323232] pl-1 text-[11px]">
    <div className="flex items-start gap-[3px]">
      {ribbonMain.map((item) => <RibbonButton key={item.text} item={item} />)}
    </div>
    <Sep className="mt-1 h-[84px]" />
    <div className="flex w-[277px] flex-col pl-3.5 pt-0.5">
      <div className="flex gap-2.5">
        <div className="flex flex-col">
          <SmallCommand icon="layers+gear" text="图层设置" />
          <SmallCommand icon="layers+box" text="移至图层" />
          <SmallCommand icon="hatch" text="分型面避空" />
        </div>
        <div className="flex flex-col">
          <SmallCommand icon="section" text="剖视图" />
          <SmallCommand icon="layers+copy" text="复制至图层" />
          <SmallCommand icon="print" text="打印" />
        </div>
        <div className="flex flex-col">
          <label className="flex h-[23px] items-center gap-1 whitespace-nowrap">
            工作层
            <Dropdown label="工作层" value="1" className="w-[49px]" />
          </label>
          <SmallCommand icon="scene+gear" text="场景首选项" />
        </div>
      </div>
      <div className="flex items-center pr-2 pt-1 leading-4 text-[#3f9dbb]">
        <span className="flex-1 text-center">层</span>
        <Caret />
      </div>
    </div>
    <Sep className="mt-1 h-[84px]" />
    <div className="flex items-start gap-px pl-2">
      {ribbonTools.map((item) => <RibbonButton key={item.text} item={item} />)}
      <input type="checkbox" aria-label="显示 PMI" defaultChecked className="ml-1.5 mt-[31px] size-3 accent-white" />
      <RibbonButton item={{ icon: "bracket+ax", text: "PMI" }} />
      <RibbonButton item={{ icon: "star", text: "10.2", menu: true }} />
      <div className="opacity-50">
        <RibbonButton item={{ icon: "lamp", text: "定制灯光" }} />
      </div>
    </div>
    <Sep className="ml-1 mt-1 h-[84px]" />
    <Caret className="mb-2 ml-auto mr-1.5 h-1 self-end" />
  </section>
);

const SelectionBar = () => (
  <section className="flex h-[29px] items-center border-b border-black/70 bg-[#323232] pl-[13px] text-[11px]">
    <Dropdown label="范围" value="边界内" className="mr-2 w-[128px]" />
    <Dropdown label="选择过滤器" value="无选择过滤器" className="mr-1.5 w-[149px]" />
    <Tool name="funnel" />
    <Dropdown label="装配范围" value="整个装配" className="ml-[3px] mr-1.5 w-[156px]" />
    <Tool name="box3" cell="w-[23px] h-[22px] bg-[#005577]" />
    <Tool name="pie" />
    <Tool name="dimlink" />
    <Tool name="filterP" />
    <Sep className="ml-1.5 mr-1 h-5" />
    {barIcons.map((n, i) => <Tool key={i} name={n} />)}
    <button className="ml-1.5 w-[34px] text-left">入XT</button>
    <button className="w-[29px] text-left">出XT</button>
    {["target", "f8", "axes", "swatches", "nodeWin", "saveEdit", "cubeDim", "rainbow"].map((n) => <Tool key={n} name={n} />)}
    <button className="ml-1 flex items-center gap-1">10.2 <Caret /></button>
    <Tool name="rot" cell="ml-1 w-[25px]" />
    <button disabled className="ml-1 text-[#8c8c8c]">清除旋转参考</button>
    <Sep className="ml-2 h-5" />
    <Caret className="ml-auto mr-1.5" />
  </section>
);

// --- LEFT SIDE ---
const ResourceBar = () => (
  <nav className="flex w-9 flex-col items-center bg-[#464646]">
    <Tool name="gear" cell="h-8 w-9" />
    {resourceIcons.map((n) => (
      <Tool
        key={n}
        name={n}
        cell={clsx("h-11 w-full", n === "bracket" && "border-y border-l border-black/50 bg-[#323232]")}
        size="size-6"
      />
    ))}
  </nav>
);

const Navigator = () => (
  <aside className="flex w-[37px] flex-col items-center border-x border-black/50 bg-[#323232] pt-[5px]">
    <Icon name="bracket" />
    <div className="mt-1.5 flex w-[19px] flex-1 flex-col overflow-hidden border-x border-black/60">
      <div className="h-[21px] shrink-0 overflow-hidden bg-[#5c5c5c] pl-1.5 text-[11px] leading-5">名</div>
      <svg viewBox="0 0 18 80" className="h-20 shrink-0" fill="none" stroke="#fff" aria-hidden="true">
        <path d="M17.500 10.500H9.500V76" strokeDasharray="2 1" />
        {[30, 50, 70].map((y) => (
          <g key={y}>
            <rect x={5.5} y={y - 3.5} width={8} height={8} fill="#323232" />
            <path d={`M7 ${y + 0.5}H12M14 ${y + 0.5}H18`} />
            {y < 70 && <path d={`M9.500 ${y - 2}V${y + 3}`} />}
          </g>
        ))}
      </svg>
      {Array.from({ length: 27 }, (_, i) => (
        <div key={i} className="h-5 shrink border-t border-black/30" />
      ))}
    </div>
    <button aria-label="滚动" className="flex h-[18px] w-[19px] items-center justify-center bg-[#ececec]">
      <svg viewBox="0 0 14 8" className="h-2 w-3.5"><path d="M5 1L2 4L5 7M9 1L12 4L9 7" fill="none" stroke="#333" strokeWidth={1.5} /></svg>
    </button>
    <div className="mb-1 mt-[3px] h-[5px] w-[18px] border border-black/60 bg-[#5c5c5c]" />
    {["依附性", "细节", "预览", "关系"].map((t) => (
      <button key={t} aria-label={t} className="flex h-6 w-[19px] items-center justify-center border-b-2 border-black/50 pl-1 pt-0.5">
        <svg viewBox="0 0 6 10" className="h-2.5 w-1.5"><path d="M0 0L6 5L0 10z" fill="#3aa7c4" /></svg>
      </button>
    ))}
    <div className="h-[7px]" />
  </aside>
);

const SideToolbar = () => (
  <aside className="flex w-[52px] flex-col border-r border-black/60 bg-[#323232] pl-px pt-1.5">
    {["f8", "print", "bars", "trap", "plateHole"].map((n) => <Tool key={n} name={n} cell="h-8 w-12" size="size-6" />)}
    <div className="grid w-12 grid-cols-2">
      {sideIcons.map((n, i) => <Tool key={i} name={n} cell="h-6" />)}
      <button className="relative h-6 text-[11px]">
        <span className="absolute left-1 top-0.5 [writing-mode:vertical-rl]">10.2</span>
      </button>
    </div>
    <Caret className="ml-6 mt-1.5 w-6" />
    <div className="mb-2 mt-2.5 h-px w-[42px] self-center bg-black/70" />
    <div className="grid w-12 grid-cols-2">
      {sideBottom.map((n, i) => <Tool key={i} name={n} cell="h-6" />)}
    </div>
    <div className="my-1 h-px w-[42px] self-center bg-black/70" />
    <svg viewBox="0 0 4 6" className="ml-1.5 mt-2 h-1.5 w-1"><path d="M4 0V6L0 3z" fill="#fff" /></svg>
  </aside>
);

// --- CANVAS ---
const Triad = () => (
  <svg viewBox="0 0 130 130" className="absolute left-[72px] top-[627px] size-[130px] font-['Noto_Sans',sans-serif] text-[11px]" aria-hidden="true">
    <path d="M11 34L52 31L57 90L15 93zM11 34V62L15 93M11 61L56 58M52 31L57 90" fill="none" stroke="#777" strokeWidth={1} />
    <path d="M32 32V24H28L33.500 15L39 24H35V32z" fill="#1447f0" />
    <path d="M54 58L87 56V52L106 57L87 62V60L54 62z" fill="#cc2229" />
    <path d="M36 92L39 106H35L41 118L44 104H41V92z" fill="#1d6b23" />
    <text x={30} y={13} fill="#2a4df0">Z</text>
    <text x={112} y={60} fill="#d9454b">X</text>
    <text x={38} y={128} fill="#2d8a33">Y</text>
  </svg>
);

const Part = () => (
  <svg viewBox="0 0 540 510" className="absolute left-[1412px] top-[363px] h-[170px] w-[180px] font-['Noto_Sans',sans-serif]" aria-hidden="true">
    <path d="M114 245V280C120 300 150 308 190 328L320 380C350 395 418 396 417 365V335L300 250z" fill="#6d7b7e" stroke="#222" strokeWidth={2} />
    <path d="M114 248C112 220 150 198 186 198C220 198 232 208 250 222L390 300C412 312 416 322 413 340C405 368 350 366 325 352L190 296C150 288 116 276 114 248z" fill="#9baaad" stroke="#1c1c1c" strokeWidth={4} strokeDasharray="6 2" />
    <ellipse cx={180} cy={242} rx={56} ry={38} fill="#5c686b" stroke="#222" strokeWidth={3} />
    <ellipse cx={180} cy={254} rx={50} ry={24} fill="#fff" />
    <ellipse cx={367} cy={330} rx={44} ry={28} fill="#5c686b" stroke="#222" strokeWidth={3} />
    <ellipse cx={367} cy={342} rx={38} ry={16} fill="#fff" />
    <path d="M130 275V300M344 366V390" stroke="#222" strokeWidth={2} />
    <path d="M179 110L182 172L198 410M158 255H202M182 172L303 163V245L400 240" fill="none" stroke="#a8444c" strokeWidth={3} />
    <path d="M182 172L192 350L325 340L303 245L200 255" fill="none" stroke="#d8dede" strokeWidth={3} />
    <path d="M179 95L188 128H170z" fill="#8c2f38" />
    <path d="M426 236L378 230V248z" fill="#a8444c" />
    <path d="M202 440L190 404L209 402z" fill="#8c2f38" />
    <g fill="#a8585e" fontSize={38}>
      <text x={167} y={94}>Z</text>
      <text x={434} y={248}>X</text>
      <text x={194} y={472}>Y</text>
    </g>
  </svg>
);

const Cells = ({ items }: { items: string[] }) => (
  <>
    {items.map((n, i) => <Tool key={i} name={n} cell="h-[30px] w-[31px]" size="size-6" />)}
  </>
);

const PanelRow = ({ children }: { children: React.ReactNode }) => <div className="flex h-[30px] items-center">{children}</div>;

const CommandPanel = () => (
  <div className="absolute left-[2111px] top-[161px] flex w-[442px] flex-col border border-black bg-[#323232] px-0.5 pb-1 pt-[3px] text-[11px]">
    <PanelRow>
      <Cells items={["boxSel", "rot"]} />
      <button disabled className="mr-1 pl-1 text-[#8c8c8c]">清除旋转参考</button>
      <Cells items={["ruler", "eyePair"]} />
      <Caret className="w-4" />
      <Cells items={["undo"]} />
      <Caret className="w-4" />
      <Cells items={["redo", "hash", "eyeList"]} />
    </PanelRow>
    <PanelRow>
      <SearchBox className="mx-1 w-[178px]" />
      <Cells items={["orangeSq+move", "arc", "line", "lineP", "sketch", "sCurve", "hexagon", "ellipse"]} />
    </PanelRow>
    <PanelRow>
      <Cells items={["corner", "chamfer", "curveS", "spring", "A", "offset", "sheetR", "sheetS", "loop", "barrel", "curveB", "curveA", "sheetX", "sheetM"]} />
    </PanelRow>
    <PanelRow>
      <Cells items={["sketchO", "sphereP", "sheetP", "cylC", "sCurve+mirO", "sCurve+scale", "sCurveO", "sheetO", "sCurve"]} />
      <button className="px-1">简单干涉</button>
      <Cells items={["bracket+rings", "sheetG", "sheet+pick"]} />
    </PanelRow>
    <PanelRow>
      <Cells items={["frameO+micro", "cubeO+micro", "ibeam", "blade", "picture", "plane", "arrowP", "csys", "plus", "plusC", "hh", "cove", "slab", "rib"]} />
    </PanelRow>
    {panelRows.map((row, i) => (
      <PanelRow key={i}>
        <Cells items={row} />
      </PanelRow>
    ))}
    <PanelRow>
      <Cells items={["rainbow", "winB", "win", "print"]} />
      <Dropdown label="选择过滤器" value="无选择过滤器" className="mx-1 w-[149px]" />
      <Cells items={["eyeBolt", "bolts", "bracket", "layers+gear"]} />
    </PanelRow>
    <PanelRow>
      <Cells items={["layers+box", "save", "saveEdit"]} />
      {["lineD", "tangD", "curveDim", "sheetD", "curveDim2", "crossD", "ringD", "lineM"].map((n) => (
        <Tool key={n} name={n} cell={clsx("h-[30px] w-[31px]", ["lineD", "crossD", "lineM"].includes(n) && "bg-[#3b4248]")} size="size-6" />
      ))}
      <button className="w-[31px] pl-1 text-left">入XT</button>
      <button className="w-[31px] pl-1 text-left">出XT</button>
    </PanelRow>
    <PanelRow>
      <button className="flex items-center gap-1 pl-1">10.2 <Caret /></button>
      <Tool name="swatches" cell="ml-1 w-[31px]" size="size-6" />
      <Tool name="xDots" cell="w-[31px]" size="size-6" />
    </PanelRow>
  </div>
);

const DocTabs = () => (
  <div className="flex h-[25px] items-center bg-[#323232] text-xs">
    <button className="flex items-center gap-1 pl-1.5">
      <Icon name="find" />
      发现中心
    </button>
    <button className="ml-5 flex items-center gap-1 pl-1.5">
      <Icon name="bracket" />
      model1.prt
      <Icon name="clip" className="ml-0.5 size-3" />
    </button>
    <div className="ml-5 flex h-full items-center gap-1 bg-[#3397b9] px-1.5">
      <button className="flex items-center gap-1">
        <Icon name="bracket" />
        NX2506-测试.prt
        <Icon name="clip" className="size-3" />
      </button>
      <button aria-label="关闭标签页">
        <svg viewBox="0 0 10 10" className="size-2.5"><path d="M1 1L9 9M9 1L1 9" stroke="#fff" strokeWidth={2} /></svg>
      </button>
    </div>
  </div>
);

// --- TASKBAR ---
const tile = (bg: string, fg: string, t: string, size = 12) => (
  <>
    <rect width={24} height={24} rx={4} fill={bg} />
    <text x={12} y={16.5} fontSize={size} fontWeight="bold" fill={fg} textAnchor="middle">{t}</text>
  </>
);

const apps: Record<string, React.ReactNode> = {
  ux: <><rect width={24} height={24} fill="#68117c" />{s("M7 21C12 21 18 20 20 16M8 17C11 17 14 16 16 13M11 3C16 6 8 8 12 11", "#e8c8f0", 1.6)}</>,
  store: <>{s("M8 6V1H16V6", "#3cb4e8", 2)}{f("M1 5H23V24H1z", "#f4f4f4")}{f("M7 9H11.500V13.500H7z", "#f25022")}{f("M12.500 9H17V13.500H12.500z", "#7fba00")}{f("M7 14.500H11.500V19H7z", "#00a4ef")}{f("M12.500 14.500H17V19H12.500z", "#ffb900")}</>,
  chrome: <>{dot(12, 12, 12, "#34a853")}{f("M12 12L2 5.500A12 12 0 0 1 23 7H12z", "#ea4335")}{f("M12 7H23A12 12 0 0 1 12 24L17 14z", "#fbbc04")}{dot(12, 12, 5.5, "#fff")}{dot(12, 12, 4.3, "#4285f4")}</>,
  edge: <>{dot(12, 12, 12, "#1173c8")}{f("M1 9C4 -3 24 -3 24 11C24 17 16 17 15 13C14 8 6 7 1 12z", "#3fd18a")}{f("M7 13C8 22 16 23 21 19C17 26 4 26 1 14C2 9 6 9 7 13z", "#2b9be8")}{f("M24 13C22 17 17 16 15 14C14 17 16 19 20 19z", "#2d1d20")}</>,
  k: <><rect width={24} height={24} rx={5} fill="#e0a030" /><rect x={1} y={1} width={22} height={21} rx={4} fill="#3d4448" /><text x={12} y={15} fontSize={11} fill="#fff" textAnchor="middle">K</text></>,
  cube: <><rect width={24} height={24} rx={5} fill="#d8d6d0" />{s("M12 8L18 11V18L12 21L6 18V11zM6 11L12 14L18 11M12 14V21M9 0V8M15 0V8", "#222", 1.6)}</>,
  wheel: <>{dot(12, 12, 12, "#ff2020")}{f("M12 12L12 0A12 12 0 0 1 23 8z", "#ff40c0")}{f("M12 12L23 8A12 12 0 0 1 19 22z", "#8040ff")}{f("M12 12L19 22A12 12 0 0 1 5 22z", "#2080ff")}{f("M12 12L5 22A12 12 0 0 1 1 8z", "#20e040")}{f("M12 12L1 8A12 12 0 0 1 12 0z", "#f0e020")}{s("M12 2V13L15 17", "#111", 2)}</>,
  sw: <>{f("M2 3L20 0L23 4V15H2z", "#c81a1a")}<text x={12} y={13} fontSize={11} fontWeight="bold" fill="#fff" textAnchor="middle">SW</text><text x={12} y={23} fontSize={9} fontWeight="bold" fill="#fff" textAnchor="middle">2024</text></>,
  calc: <>{f("M3 0H21V24H3z", "#5d6f80")}{f("M5 2H19V7H5z", "#46c0e8")}{f("M5 9H9V13H5zM10 9H14V13H10zM15 9H19V13H15zM5 14H9V18H5zM10 14H14V18H10zM5 19H9V23H5zM10 19H14V23H10z", "#b8c4cf")}{f("M15 14H19V23H15z", "#2f7fd0")}</>,
  ring: <><rect width={24} height={24} rx={5} fill="#22384a" /><circle cx={12} cy={12} r={7.5} fill="none" stroke="#e8e8e8" strokeWidth={2.5} /><rect x={0.5} y={0.5} width={23} height={23} rx={5} fill="none" stroke="#708090" /></>,
  blender: <>{s("M1 18L12 9M3 9H14M10 4L15 8", "#f08a1c", 3)}{dot(15, 14, 8, "#f08a1c")}{dot(15, 14, 5, "#fff")}{dot(15, 14, 3.2, "#265787")}</>,
  obs: <>{dot(12, 12, 12, "#d8d8d8")}{dot(12, 12, 10.8, "#302e31")}{s("M12 12C8 10 8 5 12 3M12 12C16 10 20 13 19 17M12 12C12 17 7 19 4 16", "#d0d0d0", 2.5)}</>,
  zb: <>{f("M0 0H24V24H0z", "#080808")}{s("M2 5L10 16L20 8L13 22L7 18M9 2L12 12", "#fff", 2.5)}<text x={20} y={8} fontSize={9} fill="#fff" textAnchor="middle">8</text></>,
  flame: <><rect width={24} height={24} rx={3} fill="#e5532d" />{f("M5 10L11 4V11L19 9L13 13V20L10 14L5 17z", "#fff")}</>,
  yun: tile("#d8172a", "#fff", "云听", 10),
  ps: tile("#001e36", "#31a8ff", "Ps", 12),
  whale: f("M1 10C4 4 12 10 15 12C17 9 20 6 23 4C23 10 20 18 13 20C5 21 0 16 1 10z", "#4d6bfe"),
  pr: tile("#00005b", "#9999ff", "Pr", 12),
  ai: tile("#330000", "#ff9a00", "Ai", 12),
  excel: <>{f("M6 1H24V23H6z", "#21a366")}{f("M15 1H24V12H15z", "#33c481")}{f("M6 12H15V23H6z", "#107c41")}<rect y={6} width={13} height={13} fill="#107c41" /><text x={6.5} y={16} fontSize={10} fontWeight="bold" fill="#fff" textAnchor="middle">X</text></>,
  folder: <>{f("M1 2H9L11 5H23V22H1z", "#e8a317")}{f("M1 8H23V22H1z", "#ffd869")}{f("M5 22V15H19V22H16V18H8V22z", "#3d9be0")}</>,
  swirl: <>{f("M0 0H24V24H0z", "#fff")}{s("M12 3C20 4 22 14 16 19M8 4C14 4 19 10 16 16M5 8C10 5 17 9 15 15M4 13C6 8 14 8 14 14M5 18C4 13 11 11 13 15M9 21C6 18 9 14 12 16", "#e8467c", 1.6)}</>,
  diy: <>{dot(12, 12, 12, "#e6252d")}<text x={12} y={16} fontSize={11} fontWeight="bold" fill="#fff" textAnchor="middle">dıy</text></>,
  bdraw: <><rect width={24} height={24} fill="#2b73ea" />{s("M11 5L17 16H7M5 19H19", "#fff", 2)}</>,
  gears: <><circle cx={10} cy={9} r={6} fill="none" stroke="#d8dfe6" strokeWidth={4.5} strokeDasharray="3.200 1.500" /><circle cx={10} cy={9} r={5} fill="none" stroke="#9fb4c8" strokeWidth={2} /><circle cx={19} cy={19} r={3.5} fill="none" stroke="#d8dfe6" strokeWidth={2.5} strokeDasharray="2 1" /></>,
  max: <><rect width={24} height={24} rx={2} fill="#45a6c4" /><text x={12} y={14} fontSize={14} fontWeight="bold" fill="#fff" textAnchor="middle">3</text><text x={12} y={22} fontSize={6} fill="#fff" textAnchor="middle">MAX</text></>,
  q: <><circle cx={11} cy={11} r={8.5} fill="none" stroke="#2a86d8" strokeWidth={3} />{f("M13 15L20 12L24 18L18 23z", "#f4b52c")}{f("M12 18L16 16L17 22z", "#3cb04a")}</>,
  nx: bases.nx,
  win: f("M1 4L10 2.500V11.500H1zM11.500 2.300L23 1V11.500H11.500zM1 12.500H10V21.500L1 20zM11.500 12.500H23V23L11.500 21.700z"),
  find: <><circle cx={14} cy={9} r={8} fill="none" stroke="#fff" strokeWidth={2} />{s("M8 15L1 23", "#fff", 2.5)}</>,
  task: s("M3 2V5H15V2M3 9H15V15H3zM3 22V19H15V22M20 2V8M20 11V22", "#fff", 1.8),
  cloud: <>{f("M3 20C-1 14 5 10 8 11C10 4 20 6 19 12C25 13 24 20 19 20z", "#b8cdf0")}{dot(18, 6, 6, "#e0312d")}<text x={18} y={9} fontSize={8} fill="#fff" textAnchor="middle">4</text></>,
  qq: <>{f("M6 8C6 -2 18 -2 18 8L21 16L17 21H7L3 16z", "#111")}{dot(12, 15, 5, "#fff")}{f("M6 10H18V13H6z", "#e0312d")}{f("M5 20H11V23H5zM13 20H19V23H13z", "#f4b52c")}{dot(19, 16, 5, "#f4a52c")}</>,
  bird: <><rect width={24} height={24} rx={6} fill="#1a8cf0" />{f("M7 5L18 9L14 13L16 16L9 20L11 14z", "#fff")}</>,
  bolt: <><rect width={24} height={24} rx={10} fill="#b8b8b8" />{f("M13 4L7 13H11L10 20L17 11H13z", "#fff")}</>,
  pc: s("M5 5H22V17H5zM9 21H18M13 17V21M2 2V14H5", "#fff", 1.6),
  vol: s("M2 9H6L11 4V20L6 15H2zM15 8C17 10 17 14 15 16M18 5C22 9 22 15 18 19", "#fff", 1.5),
  kbd: s("M2 2H22V22H2zM2 9H22M2 15H22M9 2V22M15 2V22", "#fff", 1.8),
  note: s("M2 2H22V18H16L12 22L8 18H2z", "#fff", 1.6),
};

const appList = [
  "ux", "store", "chrome", "edge", "k", "cube", "wheel", "sw", "calc", "ring", "blender", "obs", "zb", "flame",
  "yun", "ps", "whale", "pr", "ai", "excel", "folder", "swirl", "diy", "bdraw", "gears", "max", "q", "nx",
];
const running = ["edge", "excel", "folder", "q", "nx"];

const AppIcon = ({ name, className = "size-6" }: { name: string; className?: string }) => (
  <svg viewBox="0 0 24 24" fill="none" aria-hidden="true" className={clsx("shrink-0 overflow-visible", className)}>
    {apps[name]}
  </svg>
);

const Clock = ({ className = "" }: { className?: string }) => (
  <div className={clsx("flex flex-col items-center text-xs leading-[18px]", className)}>
    <time>17:43</time>
    <time>2025/7/22</time>
  </div>
);

const TaskbarLeft = () => (
  <div className="flex w-1/2 flex-col">
    <div className="flex h-1.5 items-start bg-[#262626]">
      <span className="ml-[57px] w-[94px] border-t-2 border-dashed border-white/90" />
      <span className="ml-auto mr-[265px] h-1.5 w-10 bg-[#6a6a6a] px-3"><i className="block h-0.5 bg-white" /></span>
    </div>
    <div className="flex flex-1 items-center">
      <button aria-label="开始" className="flex h-full w-[49px] items-center justify-center"><AppIcon name="win" className="size-4" /></button>
      <button aria-label="搜索" className="flex h-full w-[49px] items-center justify-center"><AppIcon name="find" className="size-5" /></button>
      <button aria-label="任务视图" className="flex h-full w-[49px] items-center justify-center"><AppIcon name="task" className="size-4" /></button>
      {appList.map((n) => (
        <button key={n} aria-label={n} className={clsx("flex h-full w-[49px] items-center justify-center", n === "nx" && "bg-[#5c4a4b]")}>
          <AppIcon name={n} />
        </button>
      ))}
      <Clock className="ml-auto mr-1.5 self-start" />
    </div>
  </div>
);

const TaskbarRight = () => (
  <div className="flex w-1/2 items-center">
    <button aria-label="开始" className="flex w-[49px] items-center justify-center"><AppIcon name="win" className="size-4" /></button>
    <label className="flex h-full w-[287px] items-center overflow-hidden border border-[#5a5a5a] bg-[#2f2f30] pl-2.5">
      <AppIcon name="find" className="size-4" />
      <input aria-label="任务栏搜索" placeholder="搜索" className="ml-3 w-32 bg-transparent text-sm placeholder:text-[#d0d0d0]" />
      <svg viewBox="0 0 96 40" className="ml-auto h-10 w-24" aria-hidden="true">
        <circle cx={40} cy={20} r={17} fill="#4a4038" stroke="#e8d0a0" strokeWidth={2} />
        <circle cx={40} cy={20} r={12} fill="none" stroke="#f0b030" strokeWidth={4} strokeDasharray="2 3" />
        <circle cx={40} cy={20} r={9} fill="#ffc648" />
        <path d="M2 40C6 30 16 34 22 31C30 28 36 36 44 35C54 27 66 26 78 34L86 40z" fill="#7f95a8" />
      </svg>
    </label>
    <button aria-label="任务视图" className="flex w-[50px] items-center justify-center"><AppIcon name="task" className="size-4" /></button>
    {appList.map((n) => (
      <button
        key={n}
        aria-label={n}
        className={clsx("flex h-full flex-1 items-center justify-center border-b-2", running.includes(n) ? "border-[#f09070]" : "border-transparent", n === "nx" && "bg-[#5c4a4b]")}
      >
        <AppIcon name={n} />
      </button>
    ))}
    <div className="relative flex h-full w-[482px] shrink-0 items-center gap-2 pl-6">
      <AppIcon name="cloud" />
      <span className="mr-4 text-[15px]">29℃</span>
      <Icon name="up" className="size-3" />
      <AppIcon name="qq" className="mr-5 size-5" />
      <AppIcon name="q" className="size-4" />
      <AppIcon name="bird" className="size-4" />
      <AppIcon name="bolt" className="size-4" />
      <AppIcon name="pc" className="size-4" />
      <AppIcon name="vol" className="size-4" />
      <span className="text-base">中</span>
      <AppIcon name="kbd" className="size-4" />
      <Clock className="ml-3.5 mr-3" />
      <AppIcon name="note" className="size-4" />
      <span className="absolute bottom-0.5 right-1 whitespace-nowrap font-['Liberation_Serif','Noto_Sans_CJK_SC',serif] text-sm leading-5 text-white/60">
        UG爱好者论坛@WWW.UGSNX.COM
      </span>
    </div>
  </div>
);

const App: React.FC = () => (
  <div className="flex h-screen flex-col overflow-hidden bg-[#2a1a1d] font-['Noto_Sans','Noto_Sans_CJK_SC',sans-serif] text-white">
    <Header />
    <div className="flex min-h-0 flex-1 flex-col border-b-[7px] border-l-[3px] border-r-4 border-b-[#046b92] border-l-[#006489] border-r-[#047ba8] bg-[#323232]">
      <Ribbon />
      <SelectionBar />
      <main className="relative flex min-h-0 flex-1">
        <ResourceBar />
        <Navigator />
        <SideToolbar />
        <div className="flex min-w-0 flex-1 flex-col">
          <DocTabs />
          <div className="relative flex-1 overflow-hidden border-r border-t-2 border-r-black border-t-[#3d8ca8] bg-white">
            <Part />
            <Triad />
            <CommandPanel />
          </div>
        </div>
        <button aria-label="助手" className="absolute left-[33px] top-[400px] flex size-10 items-center justify-center rounded-full bg-white shadow-md">
          <span className="flex size-6 items-center justify-center rounded-full bg-[#1456f0]">
            <i className="size-3 rounded-full rounded-br-none bg-white" />
          </span>
        </button>
      </main>
      <footer className="h-6 border-t-2 border-black/60 bg-[#323232]" />
    </div>
    <div className="flex h-10 bg-linear-to-r from-[#231a1c] via-[#3a1a1c] to-[#2a1c20]">
      <TaskbarLeft />
      <TaskbarRight />
    </div>
  </div>
);

export default App;
